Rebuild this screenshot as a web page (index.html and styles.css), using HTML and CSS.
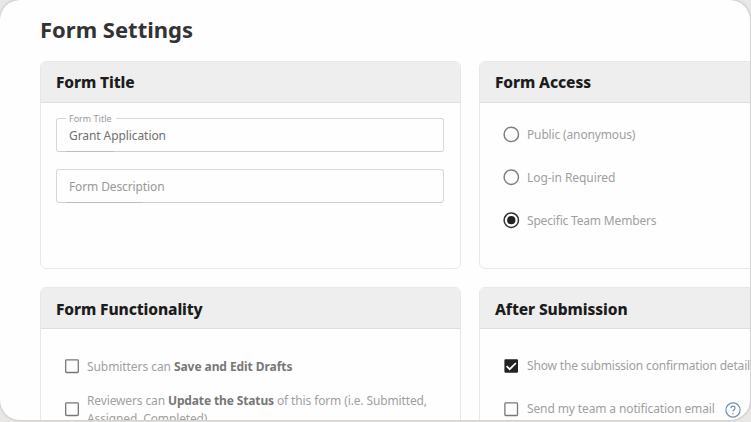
FILE: index.html
```html
<!DOCTYPE html>
<html lang="en">
<head>
<meta charset="utf-8">
<title>Form Settings</title>
<link rel="stylesheet" href="styles.css">
</head>
<body>
<main class="window">
  <h1 class="page-title">Form Settings</h1>
  <div class="grid">
    <section class="card">
      <h2 class="card-head">Form Title</h2>
      <div class="fields">
        <div class="field field-filled"><span class="field-label">Form Title</span><span class="field-value">Grant Application</span></div>
        <div class="field field-empty"><span class="field-placeholder">Form Description</span></div>
      </div>
    </section>
    <section class="card">
      <h2 class="card-head">Form Access</h2>
      <div class="options">
        <div class="option"><svg class="icon" viewBox="0 0 18 18"><circle class="ring" cx="9.3" cy="8.4" r="7.2"/></svg><span class="o-public">Public (anonymous)</span></div>
        <div class="option"><svg class="icon" viewBox="0 0 18 18"><circle class="ring" cx="9.3" cy="8.2" r="7.2"/></svg><span class="o-login">Log-in Required</span></div>
        <div class="option"><svg class="icon" viewBox="0 0 18 18"><circle class="ring ring-on" cx="9.3" cy="8.2" r="7.2"/><circle class="dot" cx="9.3" cy="8.2" r="4.1"/></svg><span class="o-team">Specific Team Members</span></div>
      </div>
    </section>
    <section class="card">
      <h2 class="card-head card-head-low">Form Functionality</h2>
      <div class="options checks checks-left">
        <div class="option"><svg class="icon" viewBox="0 0 18 18"><rect class="box" x="2.7" y="2.9" width="12.6" height="12.6" rx=".8"/></svg><span class="o-drafts">Submitters can <b>Save and Edit Drafts</b></span></div>
        <div class="option"><svg class="icon" viewBox="0 0 18 18"><rect class="box" x="2.7" y="2.9" width="12.6" height="12.6" rx=".8"/></svg><span class="o-status">Reviewers can <b>Update the Status</b> of this form (i.e. Submitted,<br>Assigned, Completed)</span></div>
      </div>
    </section>
    <section class="card">
      <h2 class="card-head card-head-low">After Submission</h2>
      <div class="options checks">
        <div class="option"><svg class="icon" viewBox="0 0 18 18"><rect class="box-on" x="2.4" y="2.2" width="13.6" height="13.6" rx="1.2"/><path class="tick" d="M4.6 9.2 7.7 12.2 13.9 6"/></svg><span class="o-show">Show the submission confirmation details</span></div>
        <div class="option"><svg class="icon" viewBox="0 0 18 18"><rect class="box" x="2.9" y="2.9" width="12.6" height="12.6" rx=".8"/></svg><span class="o-send">Send my team a notification email</span><svg class="help" viewBox="0 0 16 16"><circle cx="8" cy="8" r="7.1"/><path d="M5.9 6.3C5.9 5 6.8 4.2 8 4.2s2.1.8 2.1 1.9c0 1.5-2.1 1.7-2.1 3.4"/><path d="M8 10.9v1.3"/></svg></div>
      </div>
    </section>
  </div>
</main>
</body>
</html>
```
FILE: styles.css
```css
* { box-sizing: border-box; }
body {
  margin: 0;
  height: 422px;
  overflow: hidden;
  background: #e9e8e7;
  font-family: "Noto Sans", "Open Sans", sans-serif;
}
.window {
  width: 750px;
  height: 420px;
  overflow: hidden;
  border-radius: 20px;
  background: #fefefe;
  box-shadow: 0 0 3px #aaa;
  padding: 13px 0 0 40px;
}
.page-title {
  margin: 0;
  height: 48px;
  font-size: 22px;
  line-height: 32px;
  font-weight: 700;
  letter-spacing: 0;
  color: #333;
  white-space: nowrap;
}
.grid {
  display: grid;
  grid-template-columns: 421px 421px;
  grid-template-rows: 208px 208px;
  gap: 18px;
}
.card {
  overflow: hidden;
  border: 1px solid #e8e8e8;
  border-radius: 6px;
}
.card-head {
  margin: 0;
  height: 41px;
  padding-left: 15px;
  background: #eee;
  border-bottom: 1px solid #dedede;
  font-size: 15.5px;
  line-height: 40px;
  font-weight: 800;
  letter-spacing: -0.1px;
  color: #1c1c1c;
  white-space: nowrap;
}
.card-head-low { line-height: 42px; }
.fields {
  display: flex;
  flex-direction: column;
  gap: 17px;
  padding: 15px 16px 0 15px;
}
.field {
  position: relative;
  height: 34px;
  border: 1px solid #d8d8d8;
  border-bottom-color: #cfcfcf;
  border-radius: 3px;
  padding-left: 12px;
  font-size: 12px;
  line-height: 33px;
  letter-spacing: -0.08px;
  color: #999;
}
.field::after {
  content: "";
  position: absolute;
  left: 9px;
  bottom: -1px;
  width: 77px;
  height: 1px;
  background: #bdbdbd;
}
.field-filled::after { width: 48px; }
.field-empty { line-height: 34px; letter-spacing: -0.12px; }
.field-label {
  position: absolute;
  left: 9px;
  top: -7px;
  padding: 0 4px 0 3px;
  background: #fefefe;
  font-size: 9px;
  line-height: 14px;
  letter-spacing: 0;
}
.field-value { color: #707070; }
.options { padding: 10px 0 0 22px; }
.option {
  display: flex;
  align-items: center;
  height: 43px;
  font-size: 12px;
  line-height: 18px;
  color: #a0a0a0;
  white-space: nowrap;
}
.option b { color: #777; font-weight: 700; }
.checks { padding-top: 15px; }
.icon { width: 18px; height: 18px; margin-right: 7px; flex: none; }
.checks-left .icon { margin-right: 6px; }
.checks-left .option span { padding-top: 2px; }
.o-public { letter-spacing: -0.15px; }
.o-login { letter-spacing: -0.07px; }
.o-team { letter-spacing: -0.18px; }
.o-drafts { letter-spacing: -0.07px; }
.o-status { letter-spacing: -0.13px; }
.o-show { letter-spacing: -0.17px; }
.o-send { letter-spacing: -0.12px; }
.ring { fill: none; stroke: #808080; stroke-width: 1.5; }
.ring-on { stroke: #333; }
.dot { fill: #222; }
.box { fill: none; stroke: #777; stroke-width: 1.3; }
.box-on { fill: #222; }
.tick { fill: none; stroke: #fff; stroke-width: 1.7; }
.help { width: 16px; height: 16px; margin: 2px 0 0 10px; fill: none; stroke: #7190b4; stroke-width: 1.2; flex: none; }
```
